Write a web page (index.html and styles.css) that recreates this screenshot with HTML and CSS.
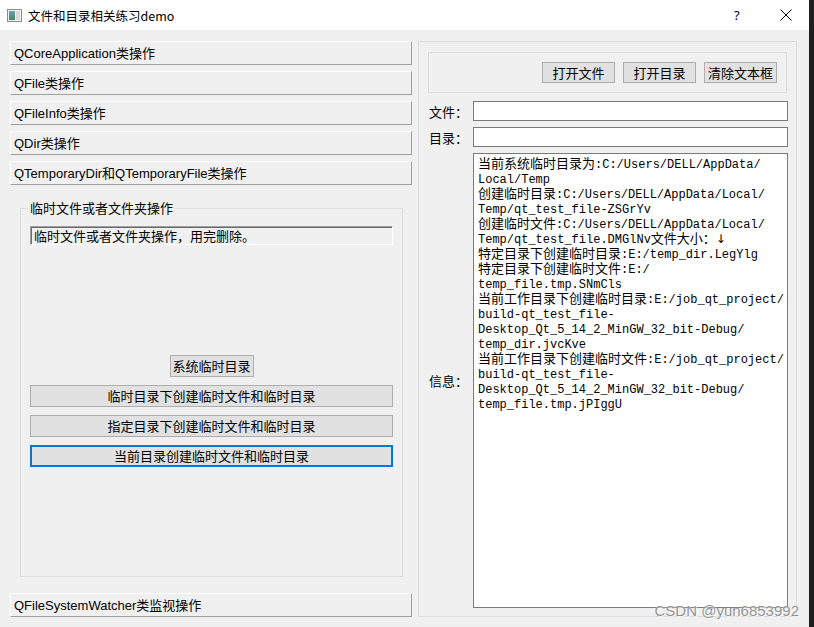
FILE: index.html
```html
<!DOCTYPE html>
<html lang="zh-CN">
<head>
<meta charset="utf-8">
<title>文件和目录相关练习demo</title>
<link rel="stylesheet" href="styles.css">
</head>
<body>
<div class="window">
  <div class="titlebar">
    <svg class="appicon" width="15" height="13" viewBox="0 0 15 13">
      <defs>
        <linearGradient id="g" x1="0" y1="0" x2="0" y2="1">
          <stop offset="0" stop-color="#6aa0b0"/>
          <stop offset="1" stop-color="#3f8a6a"/>
        </linearGradient>
      </defs>
      <rect x="0.5" y="0.5" width="14" height="12" fill="#f4f4f4" stroke="#8a8a8a"/>
      <rect x="2" y="2" width="6" height="9" fill="url(#g)"/>
      <rect x="9" y="2" width="4" height="9" fill="#d8d8d8"/>
    </svg>
    <span class="title">文件和目录相关练习demo</span>
    <span class="help">?</span>
    <svg class="close" width="12" height="12" viewBox="0 0 12 12">
      <path d="M0.5 0.5 L11.5 11.5 M11.5 0.5 L0.5 11.5" stroke="#000" stroke-width="1" fill="none"/>
    </svg>
  </div>
  <div class="content">
    <div class="left">
      <button class="nav">QCoreApplication类操作</button>
      <button class="nav">QFile类操作</button>
      <button class="nav">QFileInfo类操作</button>
      <button class="nav">QDir类操作</button>
      <button class="nav">QTemporaryDir和QTemporaryFile类操作</button>
      <fieldset class="group">
        <legend>临时文件或者文件夹操作</legend>
        <div class="group-inner">
          <div class="sunken">临时文件或者文件夹操作，用完删除。</div>
          <button class="btn sys">系统临时目录</button>
          <button class="btn wide">临时目录下创建临时文件和临时目录</button>
          <button class="btn wide">指定目录下创建临时文件和临时目录</button>
          <button class="btn wide focus">当前目录创建临时文件和临时目录</button>
        </div>
      </fieldset>
      <button class="nav">QFileSystemWatcher类监视操作</button>
    </div>
    <div class="right">
      <div class="toolbar">
        <button class="btn tb">打开文件</button>
        <button class="btn tb">打开目录</button>
        <button class="btn tb">清除文本框</button>
      </div>
      <div class="row first">
        <span class="lbl">文件：</span>
        <div class="input"></div>
      </div>
      <div class="row">
        <span class="lbl">目录：</span>
        <div class="input"></div>
      </div>
      <div class="row info">
        <span class="lbl">信息：</span>
        <div class="textarea">
          <div class="ln"><span class="c">当前系统临时目录为</span>:C:/Users/DELL/AppData/</div>
          <div class="ln">Local/Temp</div>
          <div class="ln"><span class="c">创建临时目录</span>:C:/Users/DELL/AppData/Local/</div>
          <div class="ln">Temp/qt_test_file-ZSGrYv</div>
          <div class="ln"><span class="c">创建临时文件</span>:C:/Users/DELL/AppData/Local/</div>
          <div class="ln">Temp/qt_test_file.DMGlNv<span class="c">文件大小：</span><span class="arrow">↓</span></div>
          <div class="ln"><span class="c">特定目录下创建临时目录</span>:E:/temp_dir.LegYlg</div>
          <div class="ln"><span class="c">特定目录下创建临时文件</span>:E:/</div>
          <div class="ln">temp_file.tmp.SNmCls</div>
          <div class="ln"><span class="c">当前工作目录下创建临时目录</span>:E:/job_qt_project/</div>
          <div class="ln">build-qt_test_file-</div>
          <div class="ln">Desktop_Qt_5_14_2_MinGW_32_bit-Debug/</div>
          <div class="ln">temp_dir.jvcKve</div>
          <div class="ln"><span class="c">当前工作目录下创建临时文件</span>:E:/job_qt_project/</div>
          <div class="ln">build-qt_test_file-</div>
          <div class="ln">Desktop_Qt_5_14_2_MinGW_32_bit-Debug/</div>
          <div class="ln">temp_file.tmp.jPIggU</div>
        </div>
      </div>
    </div>
  </div>
  <div class="watermark">CSDN @yun6853992</div>
</div>
</body>
</html>
```

FILE: styles.css
```css
* { box-sizing: border-box; }
html, body {
  margin: 0;
  padding: 0;
  background: #1e1e1e;
}
body {
  width: 814px;
  height: 627px;
  overflow: hidden;
  font-family: "Liberation Sans", "Noto Sans CJK SC", sans-serif;
  font-size: 13px;
  color: #000;
}
.window {
  position: relative;
  width: 809px;
  height: 627px;
  background: #f0f0f0;
  display: flex;
  flex-direction: column;
  overflow: hidden;
}
.titlebar {
  height: 30px;
  background: #fff;
  display: flex;
  align-items: center;
  padding-left: 7px;
  flex: none;
}
.appicon { flex: none; }
.title {
  margin-left: 6px;
  font-family: "Noto Sans CJK SC", "Liberation Sans", sans-serif;
  font-size: 12.5px;
  color: #000;
}
.help {
  margin-left: auto;
  font-family: "Noto Sans", "Liberation Sans", sans-serif;
  font-size: 13px;
  width: 10px;
  margin-right: 36px;
}
.close { margin-right: 17px; flex: none; }

.content {
  flex: 1;
  min-height: 0;
  display: flex;
  gap: 6px;
  padding: 11px 12px 10px 10px;
}
.left {
  width: 402px;
  display: flex;
  flex-direction: column;
  min-height: 0;
}
button {
  font-family: "Liberation Sans", "Noto Sans CJK SC", sans-serif;
  font-size: 13px;
  color: #000;
  margin: 0;
  padding: 0;
}
.nav {
  height: 24px;
  margin-bottom: 6px;
  text-align: left;
  padding: 0 0 2px 3px;
  background: #f0f0f0;
  border: 1px solid;
  border-color: #ffffff #a0a0a0 #a0a0a0 #ffffff;
  flex: none;
}
.nav:last-child { margin-bottom: 0; }

.group {
  flex: 1;
  min-height: 0;
  margin: 10px 9px 16px 10px;
  padding: 11px 9px 0 9px;
  border: 1px solid #dcdcdc;
  min-width: 0;
}
.group legend {
  padding: 0 2px;
  margin-left: -2px;
  line-height: 14px;
  font-family: "Noto Sans CJK SC", sans-serif;
  font-size: 13px;
}
.group-inner {
  display: flex;
  flex-direction: column;
}
.sunken {
  height: 19px;
  border: 1px solid;
  border-color: #a0a0a0 #ffffff #ffffff #a0a0a0;
  box-shadow: inset 1px 1px 0 #696969;
  padding-left: 3px;
  line-height: 17px;
  font-family: "Noto Sans CJK SC", sans-serif;
  font-size: 13px;
}
.btn {
  background: #e1e1e1;
  border: 1px solid #adadad;
  font-family: "Noto Sans CJK SC", sans-serif;
  height: 22px;
  line-height: 18px;
}
.sys {
  align-self: center;
  width: 84px;
  margin-top: 110px;
}
.wide {
  margin-top: 8px;
  width: 100%;
}
.focus {
  border: 2px solid #0078d7;
}

.right {
  flex: 1;
  min-height: 0;
  border: 1px solid #dcdcdc;
  padding: 10px 8px 8px 9px;
  display: flex;
  flex-direction: column;
}
.toolbar {
  height: 41px;
  border: 1px solid #dcdcdc;
  margin-right: 1px;
  display: flex;
  justify-content: flex-end;
  gap: 8px;
  padding: 9px 9px 0 0;
  flex: none;
}
.tb {
  width: 73px;
  height: 21px;
}
.row {
  display: flex;
  align-items: center;
  margin-top: 6px;
  flex: none;
}
.row.first { margin-top: 8px; }
.lbl {
  width: 45px;
  padding-left: 1px;
  font-family: "Noto Sans CJK SC", sans-serif;
  font-size: 13px;
  flex: none;
}
.input {
  flex: 1;
  height: 20px;
  background: #fff;
  border: 1px solid #7a7a7a;
}
.row.info {
  flex: 1 1 0;
  min-height: 0;
  align-items: center;
}
.textarea {
  flex: 1;
  align-self: stretch;
  background: #fff;
  border: 1px solid #7a7a7a;
  padding: 4px 0 0 4px;
  font-family: "Liberation Mono", "Noto Sans CJK SC", monospace;
  font-size: 12px;
  line-height: 15px;
  overflow: hidden;
}
.ln {
  height: 15px;
  line-height: 15px;
  white-space: pre;
}
.c {
  font-family: "Noto Sans CJK SC", sans-serif;
  font-size: 13px;
  line-height: 0;
}
.arrow {
  font-family: "DejaVu Sans", sans-serif;
  font-size: 12px;
  line-height: 0;
}
.watermark {
  position: absolute;
  right: 10px;
  bottom: 8px;
  font-family: "Liberation Sans", sans-serif;
  font-size: 15px;
  color: rgba(110, 110, 110, 0.75);
  text-shadow: 0 0 1px #fff, 1px 1px 0 rgba(255,255,255,0.6);
}
```
